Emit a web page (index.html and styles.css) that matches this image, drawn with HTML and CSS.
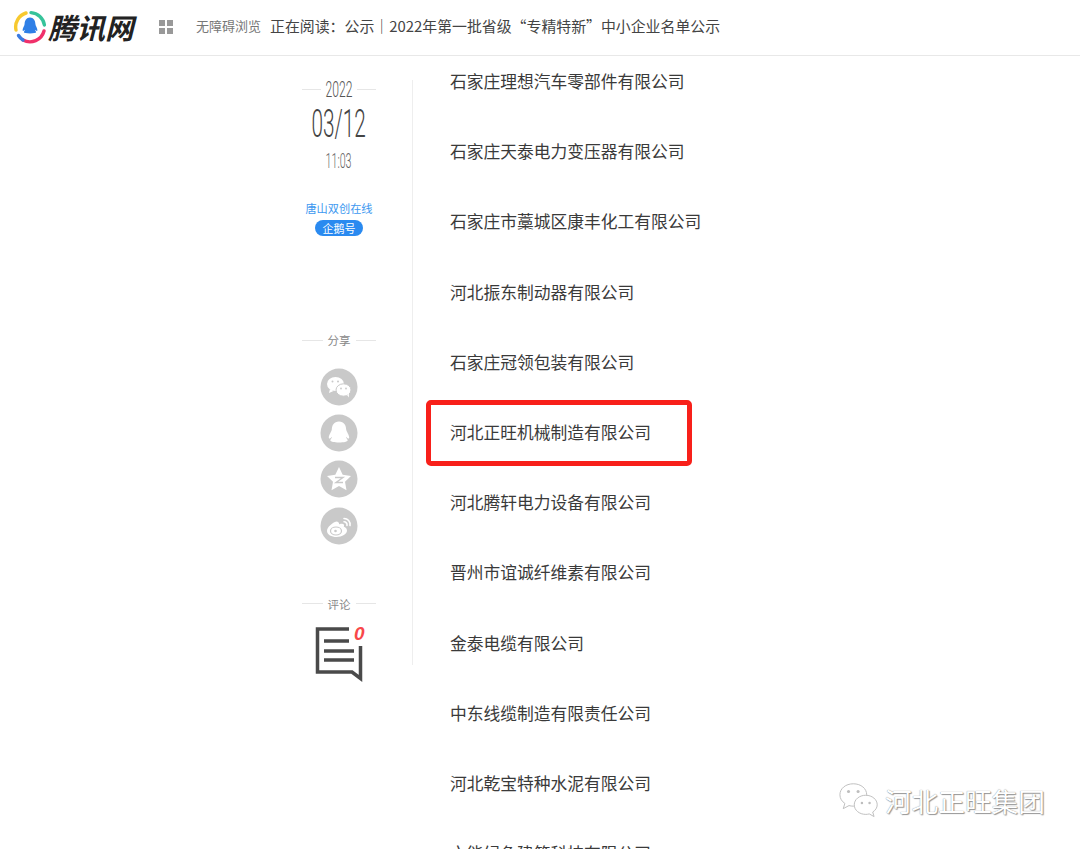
FILE: index.html
```html
<!DOCTYPE html>
<html lang="zh-CN">
<head>
<meta charset="utf-8">
<title>公示</title>
<link rel="stylesheet" href="styles.css">
</head>
<body>
<header class="topbar">
  <div class="logo">
    <svg class="logo-mark" width="34" height="34" viewBox="0 0 34 34">
      <path d="M3 20 A14.5 14.5 0 0 1 13 3" fill="none" stroke="#f7c92f" stroke-width="3.4" stroke-linecap="round"/>
      <path d="M18 2.6 A14.5 14.5 0 0 1 31.4 15" fill="none" stroke="#36c39a" stroke-width="3.4" stroke-linecap="round"/>
      <path d="M31 21 A14.5 14.5 0 0 1 10 30" fill="none" stroke="#f0306a" stroke-width="3.4" stroke-linecap="round"/>
      <path d="M10 30 A14.5 14.5 0 0 1 5.5 25.5" fill="none" stroke="#3b7be0" stroke-width="3.4" stroke-linecap="round"/>
      <path d="M17 7.5c3.6 0 5.300 3 5.400 6.400 0 1.600 2.200 4.400 2 6.400-.2 1.300-1.300.5-2.200-.5-.3 1 .9 1.600.9 2.400 0 .7-2.500 1.200-6.100 1.200s-6.100-.5-6.100-1.200c0-.8 1.200-1.400.9-2.400-.9 1-2 1.800-2.200.5-.2-2 2-4.800 2-6.400.1-3.400 1.800-6.400 5.400-6.400z" fill="#2f7fe6"/>
    </svg>
    <span class="logo-text">腾讯网</span>
  </div>
  <svg class="grid-icon" width="14" height="14" viewBox="0 0 14 14"><path d="M0 0h6v6H0zM8 0h6v6H8zM0 8h6v6H0zM8 8h6v6H8z" fill="#999"/></svg>
  <span class="access">无障碍浏览</span>
  <span class="reading">正在阅读<span class="centered-punct">：</span>公示<span class="centered-punct">｜</span>2022年第一批省级“专精特新”中小企业名单公示</span>
</header>

<main class="page">
  <aside class="side">
    <div class="rule-label year"><span class="narrow">2022</span></div>
    <div class="date"><span class="narrow">03/12</span></div>
    <div class="time"><span class="narrow">11:03</span></div>
    <div class="author">唐山双创在线</div>
    <div class="badge">企鹅号</div>

    <div class="rule-label share-label"><span>分享</span></div>
    <div class="share-list">
      <div class="share">
        <svg width="38" height="38" viewBox="0 0 38 38"><circle cx="19" cy="19" r="18.500" fill="#c9c9c9"/><ellipse cx="15.500" cy="16" rx="8.500" ry="7" fill="#fff"/><path d="M10 21l-1 4 4.500-2z" fill="#fff"/><ellipse cx="23.500" cy="22" rx="7.500" ry="6.200" fill="#fff" stroke="#c9c9c9" stroke-width="1"/><path d="M27 27l2 2.500-.2-4z" fill="#fff"/><circle cx="12.500" cy="13.500" r="1" fill="#c9c9c9"/><circle cx="18" cy="13.500" r="1" fill="#c9c9c9"/><circle cx="21" cy="20.500" r=".9" fill="#c9c9c9"/><circle cx="26" cy="20.500" r=".9" fill="#c9c9c9"/></svg>
      </div>
      <div class="share">
        <svg width="38" height="38" viewBox="0 0 38 38"><circle cx="19" cy="19" r="18.500" fill="#c9c9c9"/><path d="M19 7.500c5 0 7 3.800 7.200 8 .1 2 3.300 5.800 3 8.200-.2 1.600-1.800.7-3.200-1-.3 1.400 1.700 2.300 1.700 3.600 0 1.500-4 2.200-8.700 2.200s-8.700-.7-8.700-2.200c0-1.300 2-2.200 1.700-3.600-1.400 1.700-3 2.600-3.200 1-.3-2.400 2.900-6.200 3-8.200.2-4.200 2.200-8 7.200-8z" fill="#fff"/></svg>
      </div>
      <div class="share">
        <svg width="38" height="38" viewBox="0 0 38 38"><circle cx="19" cy="19" r="18.500" fill="#c9c9c9"/><path d="M19 7l3.700 7.800 8.300 1.100-6 5.900 1.500 8.400-7.500-4.100-7.500 4.100 1.500-8.400-6-5.900 8.300-1.100z" fill="#fff"/><path d="M15 17.500h8l-7 5h7" fill="none" stroke="#c9c9c9" stroke-width="1.400"/></svg>
      </div>
      <div class="share">
        <svg width="38" height="38" viewBox="0 0 38 38"><circle cx="19" cy="19" r="18.500" fill="#c9c9c9"/><path d="M16.500 14.500c-4 1-9.500 5.500-9.500 9.500 0 3.700 4.700 6 9.500 6 5.700 0 10.500-3 10.500-6.500 0-2.500-2.500-3.500-3.200-3.700.6-1.500.4-3-1.800-3-1.500 0-3 .7-3 .7s.9-2.500-2.500-3z" fill="#fff"/><ellipse cx="16" cy="24" rx="5.500" ry="4" fill="none" stroke="#c9c9c9" stroke-width="1.200"/><circle cx="15.500" cy="24" r="1.300" fill="#c9c9c9"/><path d="M24 11.500a6 6 0 0 1 6 7M24 14.800a3 3 0 0 1 3 3.600" fill="none" stroke="#fff" stroke-width="1.600" stroke-linecap="round"/></svg>
      </div>
    </div>

    <div class="rule-label comment-label"><span>评论</span></div>
    <div class="comment">
      <svg width="48" height="56" viewBox="0 0 48 56">
        <path d="M34 2H2.500V45H37L45.500 51.500V19" fill="none" stroke="#4a4a4a" stroke-width="3.500"/>
        <path d="M9 14h25M9 24h30M9 33h30" fill="none" stroke="#4a4a4a" stroke-width="3.500"/>
      </svg>
      <span class="comment-count">0</span>
    </div>
  </aside>

  <div class="divider"></div>

  <ul class="list">
    <li>石家庄理想汽车零部件有限公司</li>
    <li>石家庄天泰电力变压器有限公司</li>
    <li>石家庄市藁城区康丰化工有限公司</li>
    <li>河北振东制动器有限公司</li>
    <li>石家庄冠领包装有限公司</li>
    <li class="marked">河北正旺机械制造有限公司</li>
    <li>河北腾轩电力设备有限公司</li>
    <li>晋州市谊诚纤维素有限公司</li>
    <li>金泰电缆有限公司</li>
    <li>中东线缆制造有限责任公司</li>
    <li>河北乾宝特种水泥有限公司</li>
    <li>六能绿色建筑科技有限公司</li>
  </ul>
</main>

<div class="watermark">
  <svg width="46" height="40" viewBox="0 0 46 40">
    <g fill="#fff" stroke="#bdbdbd" stroke-width="1">
      <path d="M16 2C8 2 2 7 2 13.500c0 3.800 2 7 5.200 9L5.500 28l6-3.200c1.500.4 3 .6 4.500.6 8 0 14-5.300 14-11.900S24 2 16 2z"/>
      <path d="M29 14c-6.700 0-12 4.400-12 10s5.300 10 12 10c1.300 0 2.500-.2 3.700-.5l5 2.800-1.400-4.800c2.900-1.800 4.700-4.500 4.700-7.500 0-5.600-5.300-10-12-10z"/>
    </g>
    <g fill="#bdbdbd"><circle cx="11" cy="10" r="1.600"/><circle cx="21" cy="10" r="1.600"/><circle cx="25" cy="22" r="1.300"/><circle cx="33" cy="22" r="1.300"/></g>
  </svg>
  <span>河北正旺集团</span>
</div>
</body>
</html>
```
FILE: styles.css
```css
* { box-sizing: border-box; }
html, body { margin: 0; padding: 0; height: 849px; overflow: hidden; background: #fff; }
body { font-family: "Noto Sans CJK SC", "Liberation Sans", sans-serif; color: #333; position: relative; }

.topbar { height: 56px; border-bottom: 1px solid #e8e8e8; display: flex; align-items: center; padding-left: 13px; }
.logo { display: flex; align-items: center; width: 146px; margin-bottom: 2px; }
.logo-mark { flex: none; }
.logo-text { font-size: 28.500px; line-height: 34px; font-weight: 700; font-style: italic; color: #222; margin-left: 1px; }
.grid-icon { flex: none; margin-bottom: 2px; }
.access { font-size: 13px; color: #777; margin: 0 0 5px 23px; white-space: nowrap; }
.reading { font-size: 14.900px; color: #444; margin: 0 0 5px 9px; white-space: nowrap; }
.centered-punct { font-family: "Noto Sans CJK TC", sans-serif; }

.page { display: flex; align-items: flex-start; height: 793px; padding-left: 302px; overflow: hidden; }
.side { width: 74px; flex: none; display: flex; flex-direction: column; align-items: center; padding-top: 21px; }
.divider { width: 1px; height: 585px; background: #eee; margin: 24px 0 0 36px; flex: none; }

.narrow { display: inline-block; font-family: "Roboto", "Liberation Sans", sans-serif; font-weight: 300; white-space: nowrap; }

.rule-label { width: 74px; display: flex; align-items: center; justify-content: center; font-size: 11.500px; line-height: 16px; color: #888; gap: 5px; }
.rule-label::before, .rule-label::after { content: ""; flex: 1; height: 1px; background: #e6e6e6; }
.year { font-size: 22.500px; line-height: 24px; color: #555; }
.year .narrow { margin: 0 -12.300px; transform: scaleX(.54); }
.date { font-size: 38px; line-height: 40px; color: #444; white-space: nowrap; }
.date .narrow { transform: scaleX(.547); }
.time { font-size: 21px; line-height: 24px; color: #666; margin-top: 3px; }
.time .narrow { transform: scaleX(.51); }
.author { font-size: 11.200px; line-height: 16px; color: #3d98f0; margin-top: 27px; white-space: nowrap; }
.badge { width: 48px; height: 16px; border-radius: 8px; background: #2a8af0; color: #fff; font-size: 11px; line-height: 16px; text-align: center; margin-top: 4px; }

.share-label { margin-top: 96px; }
.share-list { display: flex; flex-direction: column; gap: 8.400px; margin-top: 19.500px; }
.share { width: 38px; height: 38px; }
.share svg { display: block; }

.comment-label { margin-top: 51.300px; }
.comment { position: relative; width: 48px; height: 56px; margin-top: 15px; }
.comment svg { display: block; }
.comment-count { position: absolute; left: 39px; top: -3px; font-family: "Liberation Sans", sans-serif; font-style: italic; font-weight: 700; font-size: 19px; line-height: 19px; color: #f8474a; }

.list { list-style: none; margin: 0; padding: 0 0 0 37px; flex: none; }
.list li { height: 70.200px; line-height: 24px; font-size: 16.750px; color: #3a3a3a; padding-top: 13px; white-space: nowrap; position: relative; }
.marked::after { content: ""; box-sizing: border-box; position: absolute; left: -24px; top: -6.500px; width: 266px; height: 66px; border: 5px solid #f8201a; border-radius: 5px; }

.watermark { position: absolute; right: 35px; top: 781px; display: flex; align-items: center; gap: 3px; }
.watermark svg { display: block; width: 44px; height: 40px; }
.watermark span { font-size: 26.700px; line-height: 36px; color: #fff; text-shadow: 0 0 1px #777, 1px 1px 1px #999; white-space: nowrap; margin-bottom: 1px; }
```
